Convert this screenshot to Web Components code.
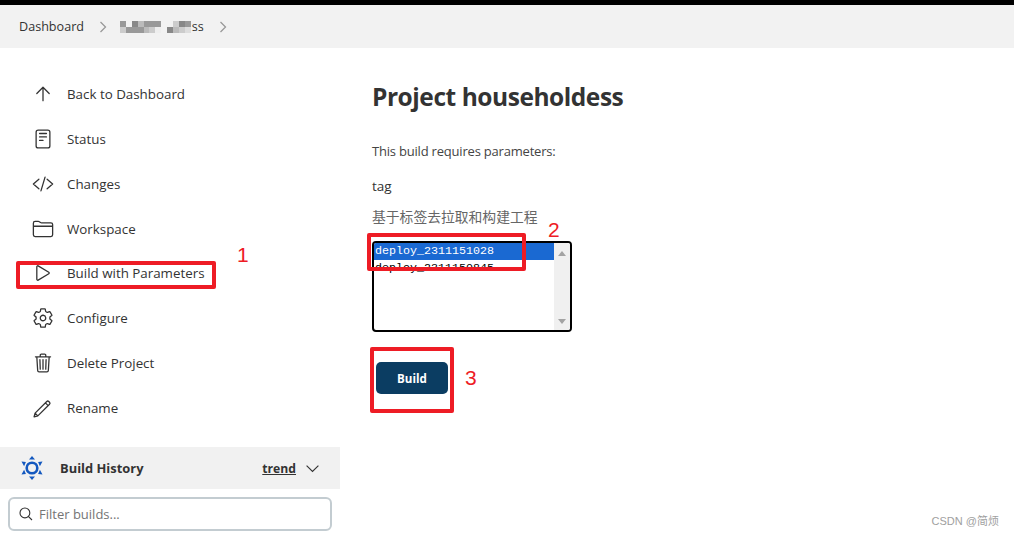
<!DOCTYPE html>
<html lang="en">
<head>
<meta charset="utf-8">
<title>Project householdess</title>
<style>
  html, body { margin: 0; height: 100%; }
  body {
    position: relative;
    overflow: hidden;
    background: #fff;
    color: #333;
    font: 14px "Open Sans", "Noto Sans CJK SC", sans-serif;
  }
  .page { display: flex; align-items: flex-start; }
</style>
</head>
<body>
  <top-crumbs></top-crumbs>
  <div class="page">
    <side-panel>
      <side-item icon="up">Back to Dashboard</side-item>
      <side-item icon="doc">Status</side-item>
      <side-item icon="code">Changes</side-item>
      <side-item icon="folder">Workspace</side-item>
      <side-item icon="play">Build with Parameters</side-item>
      <side-item icon="gear">Configure</side-item>
      <side-item icon="trash">Delete Project</side-item>
      <side-item icon="pencil">Rename</side-item>
    </side-panel>
    <build-form></build-form>
  </div>

  <red-mark style="left:16px;top:261px;width:200px;height:28px" num="1" nx="221" ny="-19"></red-mark>
  <red-mark style="left:367px;top:233px;width:159px;height:38px" num="2" nx="181" ny="-16"></red-mark>
  <red-mark style="left:370px;top:347px;width:84px;height:66px" num="3" nx="95" ny="18"></red-mark>
  <water-mark>CSDN @简烦</water-mark>

<script>
const ICONS = {
  up: '<path d="M112 244l144-144 144 144M256 120v292"/>',
  doc: '<rect x="96" y="48" width="320" height="416" rx="48"/><path d="M176 128h160M176 208h160M176 288h80"/>',
  code: '<path d="M160 368L32 256l128-112M352 368l128-112-128-112M304 96l-96 320"/>',
  folder: '<path d="M440 432H72a40 40 0 01-40-40V120a40 40 0 0140-40h75.89a40 40 0 0122.19 6.72l27.84 18.56a40 40 0 0022.19 6.72H440a40 40 0 0140 40v240a40 40 0 01-40 40zM32 192h448"/>',
  play: '<path d="M112 111v290c0 17.44 17 28.52 31 20.16l247.9-148.37c12.12-7.25 12.12-26.33 0-33.58L143 90.84c-14-8.36-31 2.72-31 20.16z"/>',
  gear: '<path d="M262.29 192.31a64 64 0 1057.4 57.4 64.13 64.13 0 00-57.4-57.4zM416.39 256a154.34 154.34 0 01-1.53 20.79l45.21 35.46a10.81 10.81 0 012.45 13.75l-42.77 74a10.81 10.81 0 01-13.14 4.59l-44.9-18.08a16.11 16.11 0 00-15.17 1.75A164.48 164.48 0 01325 400.8a15.94 15.94 0 00-8.82 12.14l-6.73 47.89a11.08 11.08 0 01-10.68 9.17h-85.54a11.11 11.11 0 01-10.69-8.87l-6.72-47.82a16.07 16.07 0 00-9-12.22 155.3 155.3 0 01-21.46-12.57 16 16 0 00-15.11-1.71l-44.89 18.07a10.81 10.81 0 01-13.14-4.58l-42.77-74a10.8 10.8 0 012.45-13.75l38.21-30a16.05 16.05 0 006-14.08c-.36-4.17-.58-8.33-.58-12.5s.21-8.27.58-12.35a16 16 0 00-6.07-13.94l-38.19-30A10.81 10.81 0 0149.48 186l42.77-74a10.81 10.81 0 0113.14-4.59l44.9 18.08a16.11 16.11 0 0015.17-1.75A164.48 164.48 0 01187 111.2a15.94 15.94 0 008.82-12.14l6.73-47.89A11.08 11.08 0 01213.23 42h85.54a11.11 11.11 0 0110.69 8.87l6.72 47.82a16.07 16.07 0 009 12.22 155.3 155.3 0 0121.46 12.57 16 16 0 0015.11 1.71l44.89-18.07a10.81 10.81 0 0113.14 4.58l42.77 74a10.8 10.8 0 01-2.45 13.75l-38.21 30a16.05 16.05 0 00-6.05 14.08c.33 4.14.55 8.3.55 12.47z"/>',
  trash: '<path d="M112 112l20 320c.95 18.49 14.4 32 32 32h184c17.67 0 30.87-13.51 32-32l20-320M80 112h352M192 112V72a23.93 23.93 0 0124-24h80a23.93 23.93 0 0124 24v40M256 176v224M184 176l8 224M328 176l-8 224"/>',
  pencil: '<path d="M48 464l24-88L344 104a32 32 0 0145 0l19 19a32 32 0 010 45L136 440zM72 376l64 64M312 136l64 64"/>'
};

class TopCrumbs extends HTMLElement {
  constructor() {
    super();
    this.attachShadow({ mode: 'open' });
    // mosaic covering the job name in the breadcrumb
    const tones = ['#999','#f2f2f2','#888','#bbb','#999','#999','#999','#f2f2f2','#f2f2f2','#ccc','#888','#999',
                   '#ccc','#999','#999','#999','#bbb','#ccc','#eee','#f2f2f2','#888','#bbb','#ccc','#ddd'];
    const cells = tones.map(c => `<i style="background:${c}"></i>`).join('');
    this.shadowRoot.innerHTML = `
      <style>
        :host { display: block; border-top: 5px solid #000; background: #f2f2f2; height: 43px; }
        nav { display: flex; align-items: center; height: 100%; padding-left: 19px; font-size: 12.6px; color: #333; }
        svg { width: 9px; height: 12px; flex: none; fill: none; stroke: #999; stroke-width: 1.3; }
        .s1 { margin: 0 12px 0 15px; }
        .s2 { margin-left: 15px; }
        .mosaic { display: grid; grid-template-columns: repeat(12, 5.9px); grid-auto-rows: 6px; margin-right: 1px; }
        i { display: block; }
        .name { display: flex; align-items: center; }
      </style>
      <nav>
        <span>Dashboard</span>
        <svg class="s1" viewBox="0 0 9 12"><path d="M1.5 1l5 5-5 5"/></svg>
        <span class="name"><span class="mosaic">${cells}</span><span>ss</span></span>
        <svg class="s2" viewBox="0 0 9 12"><path d="M1.5 1l5 5-5 5"/></svg>
      </nav>`;
  }
}

class SidePanel extends HTMLElement {
  constructor() {
    super();
    this.attachShadow({ mode: 'open' });
    this.shadowRoot.innerHTML = `
      <style>
        :host { display: block; width: 340px; flex: none; }
        .items { padding: 23.75px 0 17.25px; }
        .hist { display: flex; align-items: center; height: 42px; background: #f1f1f1; padding: 0 17.4px 0 21px; }
        .hist b { margin-left: 17px; font-size: 12.9px; font-weight: 700; color: #333; flex: 1; }
        .hist u { font-weight: 700; font-size: 12.2px; color: #333; }
        .chev { width: 21px; height: 21px; margin-left: 5.6px; fill: none; stroke: #333; stroke-width: 28; }
        .filter { display: flex; align-items: center; height: 30px; margin: 8px 8px 0; padding: 0 8px; border: 2px solid #c3ccd1; border-radius: 6px; color: #757575; font-size: 13px; }
        .filter svg { width: 16px; height: 16px; fill: none; stroke: #333; stroke-width: 36; margin-right: 5px; }
      </style>
      <div class="items"><slot></slot></div>
      <div class="hist">
        <svg width="22" height="24" viewBox="0 0 22 24">
          <circle cx="11" cy="12" r="5.3" fill="none" stroke="#1358bf" stroke-width="2.6"/>
          <path fill="#1358bf" d="M11 0l3 3.6H8zM11 24l-3-3.6h6zM.5 5.5l4.4.6-1.8 4.2zM21.5 5.5l-2.6 4.8-1.8-4.2zM.5 18.5l2.6-4.8 1.8 4.2zM21.5 18.5l-4.4-.6 1.8-4.2z"/>
        </svg>
        <b>Build History</b>
        <u>trend</u>
        <svg class="chev" viewBox="0 0 512 512"><path d="M112 184l144 144 144-144"/></svg>
      </div>
      <div class="filter">
        <svg viewBox="0 0 512 512"><path d="M221.09 64a157.09 157.09 0 10157.09 157.09A157.1 157.1 0 00221.09 64zM338.29 338.29L448 448"/></svg>
        <span>Filter builds...</span>
      </div>`;
  }
}

class SideItem extends HTMLElement {
  connectedCallback() {
    if (this.shadowRoot) return;
    this.attachShadow({ mode: 'open' });
    const icon = ICONS[this.getAttribute('icon')] || '';
    this.shadowRoot.innerHTML = `
      <style>
        :host { display: flex; align-items: center; height: 44.8px; padding-left: 32px; color: #333; font-size: 13.35px; }
        svg { width: 22px; height: 22px; margin-right: 13px; flex: none; fill: none; stroke: #333; stroke-width: 30; stroke-linecap: round; stroke-linejoin: round; }
      </style>
      <svg viewBox="0 0 512 512">${icon}</svg>
      <slot></slot>`;
  }
}

class BuildForm extends HTMLElement {
  constructor() {
    super();
    this.attachShadow({ mode: 'open' });
    this.shadowRoot.innerHTML = `
      <style>
        :host { display: block; padding: 30px 0 0 32px; color: #333; font-size: 14px; }
        h1 { margin: 0; font-size: 24.5px; letter-spacing: -.45px; line-height: 38px; font-weight: 700; color: #333; }
        p { margin: 0; line-height: 20px; }
        .lead { margin-top: 25px; color: #444; font-size: 13px; letter-spacing: -.2px; }
        .tag { margin-top: 15px; font-weight: 500; font-size: 13.5px; }
        .desc { margin-top: 10px; color: #666; font-size: 13.8px; font-family: "Noto Sans CJK SC", sans-serif; }
        .btn { margin: 30px 0 0 4px; width: 72px; height: 32px; display: flex; align-items: center; justify-content: center; background: #0b3d62; color: #fff; border-radius: 5px; font-size: 11.6px; font-weight: 700; }
        tag-list { margin-top: 15px; }
      </style>
      <h1>Project householdess</h1>
      <p class="lead">This build requires parameters:</p>
      <p class="tag">tag</p>
      <p class="desc">基于标签去拉取和构建工程</p>
      <tag-list></tag-list>
      <div class="btn">Build</div>`;
  }
}

class TagList extends HTMLElement {
  constructor() {
    super();
    this.attachShadow({ mode: 'open' });
    this.shadowRoot.innerHTML = `
      <style>
        :host { display: flex; width: 196px; height: 87px; border: 2px solid #000; border-radius: 4px; overflow: hidden; font: 11.67px/17px "Liberation Mono", monospace; color: #000; }
        .opts { flex: 1; }
        .opt { height: 17px; padding-left: 1px; }
        .sel { background: #1a69d2; color: #fff; }
        .bar { width: 16px; background: #f0f0f0; display: flex; flex-direction: column; justify-content: space-between; align-items: center; padding: 8px 0 6px; }
        .bar i { width: 0; height: 0; border: 4px solid transparent; }
        .bar .a { border-top: 0; border-bottom: 5px solid #a3a3a3; }
        .bar .b { border-bottom: 0; border-top: 5px solid #a3a3a3; }
      </style>
      <div class="opts">
        <div class="opt sel">deploy_2311151028</div>
        <div class="opt">deploy_2311150845</div>
      </div>
      <div class="bar"><i class="a"></i><i class="b"></i></div>`;
  }
}

// red annotation boxes drawn over the screenshot
class RedMark extends HTMLElement {
  constructor() {
    super();
    this.attachShadow({ mode: 'open' });
  }
  connectedCallback() {
    const nx = this.getAttribute('nx'), ny = this.getAttribute('ny');
    this.shadowRoot.innerHTML = `
      <style>
        :host { position: absolute; box-sizing: border-box; border: 4px solid #ee1c25; border-radius: 2px; }
        span { position: absolute; left: ${nx - 4}px; top: ${ny - 4}px; font: 21px/26px "Liberation Sans", sans-serif; color: #ee1c25; }
      </style>
      <span>${this.getAttribute('num')}</span>`;
  }
}

class WaterMark extends HTMLElement {
  constructor() {
    super();
    this.attachShadow({ mode: 'open' }).innerHTML = `
      <style>
        :host { position: absolute; right: 15px; top: 514px; font: 11px/14px "Liberation Sans", "Noto Sans CJK SC", sans-serif; color: #a0a0a0; }
      </style>
      <slot></slot>`;
  }
}

customElements.define('top-crumbs', TopCrumbs);
customElements.define('side-panel', SidePanel);
customElements.define('side-item', SideItem);
customElements.define('build-form', BuildForm);
customElements.define('tag-list', TagList);
customElements.define('red-mark', RedMark);
customElements.define('water-mark', WaterMark);
</script>
</body>
</html>
